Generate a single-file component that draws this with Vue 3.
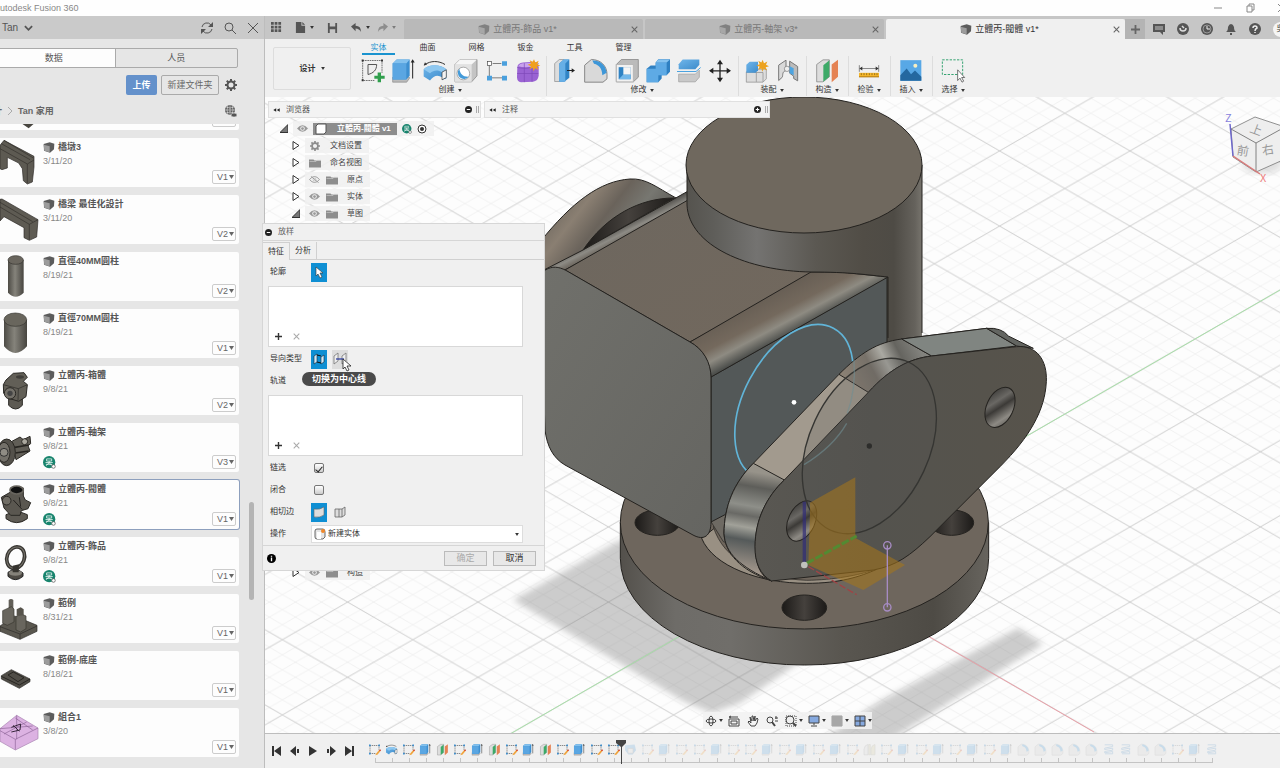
<template>
  <div class="app">
    <!-- shared icon shapes -->
    <svg class="defs" aria-hidden="true">
      <defs>
        <linearGradient id="g-blue" x1="0" y1="0" x2="1" y2="1"><stop offset="0" stop-color="#6fb5ea" /><stop offset="1" stop-color="#3d8ccb" /></linearGradient>
        <linearGradient id="g-metal" x1="0" x2="1"><stop offset="0" stop-color="#4d4b45" /><stop offset=".45" stop-color="#85837b" /><stop offset="1" stop-color="#474540" /></linearGradient>
      </defs>
      <symbol id="i-cube" viewBox="0 0 36 33"><path d="M2 6L20 1L34 5L33 22L21 32L3 26Z" fill="#5c5c5c" /><path d="M2 8L20 13V31L4 26Z" fill="#9c9c9c" /></symbol>
      <symbol id="i-sketch" viewBox="297 168 78 80">
        <path d="M305 178H363V215M305 178V238H340" fill="none" stroke="#333" stroke-width="2" stroke-dasharray="5 2" />
        <path d="M321 190H347C347 207 337 216 321 220Z" fill="#eee" stroke="#555" stroke-width="3" />
        <path d="M302 175h6v6h-6zM360 175h6v6h-6zM302 234h6v6h-6z" fill="#333" />
        <path d="M350 214h10v10h11v9h-11v10h-10v-10h-10v-9h10z" fill="#2f9e4c" />
      </symbol>
      <symbol id="i-extrude" viewBox="391 168 78 80">
        <path d="M396 228L403 221L446 228V232L438 243H396Z" fill="#bbb" stroke="#888" stroke-width="2" />
        <path d="M396 187L408 175H447V224L437 235H396Z" fill="#3d8fd0" /><path d="M396 187L408 175H447L437 187Z" fill="#83c1ee" /><path d="M396 187H437V235H396Z" fill="#5aa6e2" />
        <path d="M456 232V182" stroke="#222" stroke-width="3" /><path d="M450 184L456 174L462 184Z" fill="#222" />
      </symbol>
      <symbol id="i-revolve" viewBox="480 168 78 80">
        <path d="M488 191C505 178 530 178 549 190" fill="none" stroke="#333" stroke-width="3" /><path d="M485 193l4-10 6 8z" fill="#333" />
        <path d="M485 204C500 188 535 188 553 204L553 232L540 236V228C528 220 515 222 504 238L485 226Z" fill="url(#g-blue)" />
        <path d="M485 204C500 188 535 188 553 204L540 213C528 205 515 206 504 216Z" fill="#8fc8f0" /><path d="M540 213L553 206V229L540 236Z" fill="#f3f3f3" stroke="#333" stroke-width="2" />
      </symbol>
      <symbol id="i-hole" viewBox="572 168 78 80">
        <path d="M578 190L593 175H644V224L628 242H578Z" fill="#c4c4c4" stroke="#777" stroke-width="2" /><path d="M578 190H628V242H578Z" fill="#e2e2e2" /><path d="M578 190L593 175H644L628 190Z" fill="#f6f6f6" />
        <circle cx="603" cy="217" r="19" fill="#fff" stroke="#888" stroke-width="2" /><path d="M591 203A18 18 0 1 0 619 227C602 228 593 218 591 203Z" fill="#459bd9" />
      </symbol>
      <symbol id="i-rect" viewBox="660 168 78 80">
        <path d="M676 188V230H720M686 187H712" fill="none" stroke="#444" stroke-width="2" /><rect x="670" y="181" width="12" height="12" fill="#fff" stroke="#444" stroke-width="2" />
        <path d="M714 180h15v14h-15zM669 224h15v14h-15zM714 224h15v14h-15z" fill="#4ba0dd" />
      </symbol>
      <symbol id="i-form" viewBox="754 168 78 80">
        <path d="M761 198Q762 186 778 184L812 182Q824 186 825 198V224Q823 240 808 242L772 243Q760 241 760 228Z" fill="#9a63d3" /><path d="M763 195Q770 185 780 186L810 185Q815 190 806 197Q780 200 763 195Z" fill="#c9a2ee" />
        <path d="M760 217H824M782 186V243M805 197V242M761 199Q790 205 806 197L825 187" stroke="#7d49b8" stroke-width="2" fill="none" />
        <path d="M811 174l4 10 10-5-4 10 9 4-10 3 4 10-10-5-4 9-3-10-10 4 5-9-10-4 10-4-4-10 9 5z" fill="#f0a01e" />
      </symbol>
      <symbol id="i-press" viewBox="871 168 78 80">
        <path d="M879 187L893 175H906V232L893 241H879Z" fill="#ddd" stroke="#888" stroke-width="2" /><path d="M893 187L906 175H923V230L908 242H893Z" fill="#3184c5" /><path d="M893 187L906 175H923L911 187V242H893Z" fill="#66afe6" />
        <path d="M916 208H934" stroke="#222" stroke-width="3" /><path d="M930 201L940 208L930 215Z" fill="#222" />
      </symbol>
      <symbol id="i-fillet" viewBox="962 168 78 80">
        <path d="M967 192L987 175C1015 175 1034 194 1034 220V233L1022 243H967Z" fill="#d9d9d9" stroke="#888" stroke-width="3" /><path d="M990 178C1013 176 1030 191 1033 215L1020 222C1019 203 1011 192 995 188Z" fill="#3e97d8" />
      </symbol>
      <symbol id="i-shell" viewBox="1054 168 78 80">
        <path d="M1061 190L1076 175H1127V228L1112 242H1061Z" fill="#bbb" stroke="#777" stroke-width="2" /><path d="M1061 190H1112V242H1061Z" fill="#f1f1f1" stroke="#aaa" stroke-width="2" /><path d="M1068 198H1104V234H1068Z" fill="#2f82c3" /><path d="M1068 234L1082 220H1104V234Z" fill="#73b8ea" /><path d="M1082 198H1104V220H1082Z" fill="#f5f5f5" />
      </symbol>
      <symbol id="i-combine" viewBox="12 168 78 80">
        <path d="M17 203L29 193H44V184L52 174H87V212L77 222H62V232L52 243H17Z" fill="#2f80c2" /><path d="M17 203H44V184H77V222H52V243H17Z" fill="#5eaae5" /><path d="M44 184L52 175H87L77 184Z" fill="#85c2ef" />
      </symbol>
      <symbol id="i-split" viewBox="104 168 78 80">
        <path d="M112 189L124 175H174V191L162 204H112Z" fill="url(#g-blue)" /><path d="M107 211H164L178 199" fill="none" stroke="#4ba3e0" stroke-width="3" /><path d="M112 219H162L174 207V228L162 242H112Z" fill="#c9c9c9" stroke="#999" stroke-width="2" />
      </symbol>
      <symbol id="i-move" viewBox="196 168 78 80">
        <path d="M207 209H263M235 181V237" stroke="#222" stroke-width="4" /><path d="M202 209l13-9v18zM268 209l-13-9v18zM235 176l-9 13h18zM235 243l-9-13h18z" fill="#222" />
      </symbol>
      <symbol id="i-newcomp" viewBox="309 168 78 80">
        <path d="M316 212L325 204H376V233L366 243H316Z" fill="#ddd" stroke="#888" stroke-width="2" /><path d="M316 214H366M346 214V242M366 214V242" fill="none" stroke="#888" stroke-width="2" /><path d="M316 191L326 182H351V207L344 215H316Z" fill="url(#g-blue)" />
        <path d="M365 176l4 10 10-5-4 10 9 4-10 3 4 10-10-5-4 9-3-10-10 4 5-9-10-4 10-4-4-10 9 5z" fill="#eca21f" />
      </symbol>
      <symbol id="i-joint" viewBox="402 168 78 80">
        <path d="M413 192L435 177V208C423 211 426 222 424 228L413 238Z" fill="#d9d9d9" stroke="#777" stroke-width="3" /><path d="M446 180L470 196V239L458 232V225L446 216Z" fill="#bbb" stroke="#777" stroke-width="3" /><circle cx="438" cy="203" r="8" fill="#eee" stroke="#777" stroke-width="2" /><path d="M446 195L458 201V222L446 216Z" fill="#4da4e0" />
      </symbol>
      <symbol id="i-plane" viewBox="521 168 78 80">
        <path d="M529 190L548 176H567V227L548 242H529Z" fill="#ddd" stroke="#777" stroke-width="2" /><path d="M549 192L567 177V227L549 242Z" fill="#3daa68" /><path d="M574 190L593 176V227L574 243Z" fill="#e58354" />
      </symbol>
      <symbol id="i-measure" viewBox="648 168 78 80">
        <path d="M658 192V212M716 192V212M664 202H710" stroke="#555" stroke-width="2" /><path d="M658 202l9-6v12zM716 202l-9-6v12z" fill="#333" /><rect x="657" y="215" width="60" height="12" fill="#f7b82c" /><path d="M657 227H717" stroke="#b07400" stroke-width="3" /><path d="M664 216v6M672 216v6M680 216v6M688 216v6M696 216v6M704 216v6M711 216v6" stroke="#6b5010" stroke-width="2" />
      </symbol>
      <symbol id="i-insert" viewBox="773 168 78 80">
        <rect x="780" y="177" width="63" height="62" fill="#58a8e6" /><path d="M780 222L799 202L812 219L824 208L843 227V239H780Z" fill="#2468a0" /><circle cx="825" cy="194" r="6" fill="#f7efc2" />
      </symbol>
      <symbol id="i-select" viewBox="897 168 78 80">
        <rect x="904" y="176" width="61" height="44" fill="none" stroke="#36a372" stroke-width="3" stroke-dasharray="7 4" /><path d="M950 206V238L957 231L963 243L968 240L962 229H971Z" fill="#fff" stroke="#333" stroke-width="2" />
      </symbol>
      <symbol id="i-tsketch" viewBox="0 0 39 36">
        <path d="M6 6H33V20M6 6V30H22" fill="none" stroke="#555" stroke-width="2" stroke-dasharray="4 2" /><path d="M3 3h5v5H3zM31 3h5v5h-5zM3 28h5v5H3z" fill="#3d8fd0" /><path d="M24 31L34 19L38 22L29 33L22 35Z" fill="#f0a43d" /><path d="M33 20l4-3 2 4-3 2z" fill="#d23b2f" />
      </symbol>
      <symbol id="i-tloft" viewBox="0 0 39 36"><path d="M3 5L32 3L36 20L26 33H13L3 20Z" fill="url(#g-blue)" /><path d="M12 15H27V29H12Z" fill="#ddd" stroke="#888" stroke-width="2" /></symbol>
      <symbol id="i-thread" viewBox="0 0 39 36"><path d="M8 4H32V9L8 14V18L32 14V20L8 24V28L32 24V31H9" fill="none" stroke="#5a96c8" stroke-width="3" /></symbol>
      <symbol id="i-mirror" viewBox="0 0 39 36"><path d="M3 34V17Q5 4 15 3V34Z" fill="#ddd" stroke="#888" stroke-width="2" /><path d="M24 34V17Q26 4 36 3V34ZM17 3h5v31h-5z" fill="#d6cfa3" stroke="#998" stroke-width="2" /></symbol>
      <symbol id="i-gear" viewBox="0 0 24 24"><circle cx="12" cy="12" r="7" fill="none" stroke="currentColor" stroke-width="4" /><path d="M12 0v5M12 19v5M0 12h5M19 12h5M3.500 3.500l4 4M16.500 16.500l4 4M20.500 3.500l-4 4M7.500 16.500l-4 4" stroke="currentColor" stroke-width="4" /></symbol>
      <symbol id="i-folder" viewBox="0 0 24 18"><path d="M0 2H9L11 4H24V18H0Z" fill="currentColor" /><path d="M1 6H14L16 3H24" fill="none" stroke="#ddd" stroke-width="1" /></symbol>
      <symbol id="i-eye" viewBox="0 0 24 14"><path d="M0 7Q12 -7 24 7Q12 21 0 7Z" fill="currentColor" /><circle cx="12" cy="7" r="5" fill="#eee" /><circle cx="12" cy="7" r="3" fill="currentColor" /></symbol>
      <symbol id="i-eyeoff" viewBox="0 0 24 14"><path d="M1 7Q12 -6 23 7Q12 20 1 7ZM4 0L21 14" fill="none" stroke="currentColor" stroke-width="2" /><circle cx="12" cy="7" r="3" fill="none" stroke="currentColor" stroke-width="1" /></symbol>
      <symbol id="i-user" viewBox="0 0 36 36"><circle cx="17" cy="17" r="17" fill="#17846d" /><path d="M10 8H24V14H10ZM7 18H27M17 14V19M17 19L8 27M17 19L26 27M8 23H26" fill="none" stroke="#fff" stroke-width="2" /><circle cx="29" cy="29" r="5" fill="#fff" stroke="#555" stroke-width="2" /></symbol>
      <symbol id="i-collapse" viewBox="0 0 24 12"><path d="M11 0V12L1 6ZM23 0V12L13 6Z" fill="#222" /></symbol>
      <symbol id="i-minus" viewBox="0 0 20 20"><circle cx="10" cy="10" r="10" fill="#222" /><path d="M5 10H15" stroke="#fff" stroke-width="3" /></symbol>
      <symbol id="i-plusdot" viewBox="0 0 20 20"><circle cx="10" cy="10" r="10" fill="#222" /><path d="M5 10H15M10 5V15" stroke="#fff" stroke-width="3" /></symbol>
      <symbol id="i-x" viewBox="0 0 20 20"><path d="M2 2L18 18M18 2L2 18" stroke="currentColor" stroke-width="3" /></symbol>
      <symbol id="i-plus" viewBox="0 0 20 20"><path d="M10 0V20M0 10H20" stroke="currentColor" stroke-width="4" /></symbol>
      <symbol id="i-caret" viewBox="0 0 10 8"><path d="M0 0H10L5 8Z" fill="currentColor" /></symbol>

      <symbol id="t-partial" viewBox="0 0 120 147"><path d="M66 128L104 126L86 142Z" fill="#47453f" /></symbol>
      <symbol id="t-pier" viewBox="0 0 120 147"><path d="M0 22L12 7L102 55V87L97 132L82 138L70 128L67 92L56 75L22 58V90L6 95L0 92Z" fill="#5d5a52" stroke="#2d2b27" stroke-width="2" /><path d="M0 32L82 78L102 66M82 78V136M12 7L100 60M4 17L90 65" fill="none" stroke="#33312c" stroke-width="2" /></symbol>
      <symbol id="t-beam" viewBox="0 0 120 147"><path d="M0 13L6 12L114 74L110 126L88 136L72 128V98L12 65L0 78Z" fill="#5e5b53" stroke="#2d2b27" stroke-width="2" /><path d="M0 36L88 88L114 74M88 88V134M0 22L98 80" fill="none" stroke="#33312c" stroke-width="2" /></symbol>
      <symbol id="t-rod" viewBox="0 0 120 147"><path d="M24 24V122Q47 146 71 122V24Z" fill="url(#g-metal)" /><ellipse cx="47" cy="24" rx="23" ry="13" fill="#6a665e" stroke="#35332f" stroke-width="2" /></symbol>
      <symbol id="t-can" viewBox="0 0 120 147"><path d="M12 32V112Q46 152 81 112V32Z" fill="url(#g-metal)" /><ellipse cx="46" cy="32" rx="34" ry="20" fill="#69665d" stroke="#35332f" stroke-width="2" /></symbol>
      <symbol id="t-box" viewBox="0 0 120 147"><path d="M26 98V118Q47 140 67 118V98Z" fill="#5d5a53" stroke="#2b2925" stroke-width="3" /><path d="M10 56L18 42L40 22L72 20L82 34L70 46L82 56L78 92L56 106L30 98L11 82Z" fill="#625f57" stroke="#2b2925" stroke-width="3" /><path d="M10 56L55 68L82 56M55 68L54 104" stroke="#2b2925" stroke-width="2" fill="none" /><circle cx="30" cy="82" r="17" fill="#74716a" stroke="#2b2925" stroke-width="3" /><circle cx="30" cy="82" r="8" fill="#444" /><ellipse cx="60" cy="33" rx="12" ry="5" fill="#3f3d39" /></symbol>
      <symbol id="t-fork" viewBox="0 0 120 147"><path d="M34 56L60 42L70 50L90 40L92 62L84 68L90 84L48 110Z" fill="#615e57" stroke="#2b2925" stroke-width="3" /><path d="M40 74L86 66M46 90L86 84" stroke="#272521" stroke-width="5" /><ellipse cx="20" cy="88" rx="26" ry="40" fill="#54514b" stroke="#2b2925" stroke-width="3" /><ellipse cx="12" cy="88" rx="18" ry="30" fill="#737069" stroke="#2b2925" stroke-width="3" /><circle cx="12" cy="88" r="12" fill="#8f8c84" stroke="#333" stroke-width="3" /><circle cx="74" cy="56" r="9" fill="#aaa79e" stroke="#2b2925" stroke-width="3" /></symbol>
      <symbol id="t-valve" viewBox="0 0 120 147"><path d="M18 104Q50 88 82 104V116Q50 140 18 116Z" fill="#5e5b54" stroke="#2b2925" stroke-width="3" /><path d="M4 52L32 36V24H70V48L76 60L92 68L84 86L64 92L60 106H32L12 84Z" fill="#5a5750" stroke="#2b2925" stroke-width="3" /><ellipse cx="50" cy="30" rx="20" ry="12" fill="#111" stroke="#68655e" stroke-width="5" /><circle cx="20" cy="62" r="13" fill="#706d65" stroke="#2b2925" stroke-width="3" /><path d="M40 60L66 88M58 52L62 80" stroke="#24221f" stroke-width="3" /></symbol>
      <symbol id="t-ring" viewBox="0 0 120 147"><ellipse cx="47" cy="62" rx="26" ry="33" fill="none" stroke="#383632" stroke-width="11" transform="rotate(20 47 62)" /><ellipse cx="47" cy="62" rx="26" ry="33" fill="none" stroke="#7a776f" stroke-width="3" transform="rotate(20 47 62)" /><path d="M24 106Q46 88 69 108V118Q46 138 24 118Z" fill="#4d4a44" stroke="#222" stroke-width="3" /><ellipse cx="46" cy="108" rx="20" ry="8" fill="#85827a" /><path d="M38 86L57 82L56 106H38Z" fill="#36342f" /></symbol>
      <symbol id="t-blocks" viewBox="0 0 120 147"><path d="M0 96L44 66L111 94V112L60 136L0 112Z" fill="#5a574f" stroke="#2e2c28" stroke-width="2" /><path d="M0 98L60 120L111 96M60 120V136" fill="none" stroke="#2e2c28" stroke-width="2" /><path d="M26 18Q33 12 40 18V50H26Z" fill="#625f58" /><path d="M8 50L34 38L42 45V84L22 94L8 88ZM48 68L64 60L78 66V104L62 114L48 108Z" fill="#69665e" stroke="#38362f" stroke-width="2" /><path d="M50 46L62 40L71 46V64L50 66Z" fill="#56534b" /></symbol>
      <symbol id="t-plate" viewBox="0 0 120 147"><path d="M4 74L34 56L90 84V92L58 112L4 84Z" fill="#504d47" stroke="#2e2c28" stroke-width="2" /><path d="M4 76L58 102L90 84M24 72L40 63L72 80L54 92Z" fill="none" stroke="#282622" stroke-width="3" /></symbol>
      <symbol id="t-assy" viewBox="0 0 120 147"><path d="M0 62L50 22L114 60V92L46 126L0 100Z" fill="#dcb2e2" stroke="#a883b0" stroke-width="2" /><path d="M0 68L46 94L114 60M46 94V125M0 62L98 54M12 78L80 42M46 30L98 66M50 22V94" fill="none" stroke="#8c6497" stroke-width="2" /><path d="M34 58L62 48L60 66L34 72M40 52L58 70" fill="none" stroke="#38273d" stroke-width="3" /></symbol>
    </svg>

    <header class="window-bar">
      <span class="window-title">Autodesk Fusion 360</span>
      <div class="window-controls">
        <button aria-label="Minimize"><svg viewBox="0 0 10 10"><path d="M1 5H9" /></svg></button>
        <button aria-label="Restore"><svg viewBox="0 0 10 10"><path d="M2 3H7V9H2ZM4 3V1H9V7H7" /></svg></button>
        <button aria-label="Close"><svg viewBox="0 0 10 10"><path d="M1 1L9 9M9 1L1 9" /></svg></button>
      </div>
    </header>

    <div class="main">
      <aside class="data-panel">
        <div class="panel-head">
          <button class="account">Tan <svg viewBox="0 0 10 8"><path d="M1 2L5 6L9 2" /></svg></button>
          <button aria-label="Refresh"><svg viewBox="0 0 14 14"><path d="M2 6A5 5 0 0 1 11 4M12 8A5 5 0 0 1 3 10" /><path d="M13 1V6H8ZM1 13V8H6Z" class="solid" /></svg></button>
          <button aria-label="Search"><svg viewBox="0 0 14 14"><circle cx="6" cy="6" r="4" /><path d="M9 9L13 13" /></svg></button>
          <button aria-label="Close panel"><svg viewBox="0 0 14 14"><path d="M2 2L12 12M12 2L2 12" /></svg></button>
        </div>
        <div class="data-tabs">
          <button class="on">数据</button>
          <button>人员</button>
        </div>
        <div class="actions">
          <button class="upload">上传</button>
          <button class="new-folder">新建文件夹</button>
          <button class="bare" aria-label="Settings"><svg class="s12"><use href="#i-gear" /></svg></button>
        </div>
        <nav class="crumbs">
          <a href="#" class="cut">计</a>
          <svg viewBox="0 0 6 10"><path d="M1 1L5 5L1 9" /></svg>
          <a href="#">Tan 家用</a>
          <button class="bare globe" aria-label="Web view">
            <svg viewBox="0 0 12 12"><circle cx="5" cy="5" r="5" fill="#555" /><path d="M0 5H10M5 0V10M1 2Q5 4 9 2M1 8Q5 6 9 8M3 0Q1 5 3 10M7 0Q9 5 7 10" stroke="#e6e6e6" fill="none" stroke-width=".6" /><ellipse cx="9" cy="10" rx="3" ry="2" fill="#555" stroke="#e6e6e6" stroke-width=".6" /></svg>
          </button>
        </nav>
        <div class="file-area">
          <ul class="files">
            <li v-for="(file, i) in files" :key="i" class="file" :class="{ current: file.current }">
              <svg class="thumb"><use :href="'#t-' + file.thumb" /></svg>
              <div class="file-info">
                <div class="file-name"><svg><use href="#i-cube" /></svg>{{ file.name }}</div>
                <div class="file-date">{{ file.date }}</div>
                <svg v-if="file.user" class="file-user"><use href="#i-user" /></svg>
              </div>
              <button class="version">{{ file.version }}<svg v-if="file.version"><use href="#i-caret" /></svg></button>
            </li>
          </ul>
          <div class="scroll-track"><div class="scroll-thumb"></div></div>
        </div>
      </aside>

      <section class="workspace">
        <div class="doc-bar">
          <div class="quick">
            <button aria-label="Data panel"><svg viewBox="0 0 12 12"><path d="M0 0h3v3H0zM4 0h3v3H4zM8 0h3v3H8zM0 4h3v3H0zM4 4h3v3H4zM8 4h3v3H8zM0 8h3v3H0zM4 8h3v3H4zM8 8h3v3H8z" /></svg></button>
            <button class="drop" aria-label="File"><svg viewBox="0 0 12 12"><path d="M1 0H7V4H11V12H1ZM8 0L11 3H8Z" /></svg><svg class="caret"><use href="#i-caret" /></svg></button>
            <button aria-label="Save"><svg viewBox="0 0 12 12"><path d="M1 1H11V12H1ZM3 1V5H9V1M3 12V8H9V12" fill-rule="evenodd" /><path d="M4 1H6V4H4ZM4 9H8V11H4Z" fill="#c6c6c6" /></svg></button>
            <button class="drop" aria-label="Undo"><svg viewBox="0 0 12 12"><path d="M5 1V4Q11 4 11 11Q9 7 5 7V10L0 5Z" /></svg><svg class="caret"><use href="#i-caret" /></svg></button>
            <button class="drop dim" aria-label="Redo"><svg viewBox="0 0 12 12"><path d="M7 1V4Q1 4 1 11Q3 7 7 7V10L12 5Z" /></svg><svg class="caret"><use href="#i-caret" /></svg></button>
          </div>
          <div v-for="doc in docs" :key="doc.name" class="doc" :class="{ active: doc.active }">
            <button class="doc-name"><svg><use href="#i-cube" /></svg>{{ doc.name }}</button>
            <button class="doc-close" aria-label="Close tab"><svg><use href="#i-x" /></svg></button>
          </div>
          <div class="status">
            <button class="add" aria-label="New tab"><svg><use href="#i-plus" /></svg></button>
            <button aria-label="Comments"><svg viewBox="0 0 12 12"><path d="M0 1H12V9H10V12L7 9H0Z" /><path d="M2 4H10M2 6H10" stroke="#c6c6c6" /></svg></button>
            <button aria-label="Extensions"><svg viewBox="0 0 12 12"><circle cx="6" cy="6" r="6" /><path d="M3 5A3 3 0 1 0 9 5M5 3L7 5" stroke="#ddd" stroke-width="1.500" fill="none" /></svg></button>
            <button aria-label="Job status"><svg viewBox="0 0 12 12"><circle cx="6" cy="6" r="6" /><circle cx="6" cy="6" r="4" fill="none" stroke="#999" /><path d="M6 3V6H9" stroke="#eee" fill="none" /></svg></button>
            <button aria-label="Notifications"><svg viewBox="0 0 12 12"><path d="M1 9Q3 8 3 4Q4 1 6 1Q8 1 9 4Q9 8 11 9ZM5 10H7V12H5Z" /></svg></button>
            <button aria-label="Help"><svg viewBox="0 0 12 12"><circle cx="6" cy="6" r="6" /><path d="M4 5Q4 3 6 3Q8 3 8 5Q6 6 6 8M6 9V10" stroke="#eee" stroke-width="1.500" fill="none" /></svg></button>
            <button class="avatar">吳</button>
          </div>
        </div>

        <div class="ribbon">
          <button class="design">设计<svg><use href="#i-caret" /></svg></button>
          <div class="ribbon-body">
            <div class="ribbon-tabs">
              <button v-for="(t, i) in ribbonTabs" :key="t" :class="{ on: i === 0 }">{{ t }}</button>
            </div>
            <div class="groups">
              <div v-for="g in groups" :key="g.label" class="group">
                <div class="tools">
                  <button v-for="icon in g.icons" :key="icon" class="tool" :aria-label="icon"><svg><use :href="'#i-' + icon" /></svg></button>
                </div>
                <button class="group-label">{{ g.label }}<svg><use href="#i-caret" /></svg></button>
              </div>
            </div>
          </div>
        </div>

        <div class="canvas">
          <svg class="scene" viewBox="265 97 1015 636" preserveAspectRatio="xMinYMin slice" aria-hidden="true">
            <defs>
              <pattern id="minor" x="804" y="564.500" width="26.080" height="15.040" patternUnits="userSpaceOnUse"><path d="M0 0L26.080 15.040M0 15.040L26.080 0" stroke="#eeeeee" stroke-width=".8" fill="none" /></pattern>
              <pattern id="major" x="804" y="564.500" width="130.400" height="75.200" patternUnits="userSpaceOnUse"><path d="M0 0L130.400 75.200M0 75.200L130.400 0" stroke="#d0d0d0" stroke-width=".9" fill="none" /></pattern>
              <filter id="soft"><feGaussianBlur stdDeviation="3" /></filter>
              <linearGradient id="m-cyl" x1="686" x2="922" y1="0" y2="0" gradientUnits="userSpaceOnUse"><stop offset="0" stop-color="#55534e" /><stop offset=".12" stop-color="#5f5e5a" /><stop offset=".3" stop-color="#747371" /><stop offset=".55" stop-color="#5b5852" /><stop offset=".75" stop-color="#514d46" /><stop offset=".88" stop-color="#4e4b45" /><stop offset=".97" stop-color="#65625c" /><stop offset="1" stop-color="#77746d" /></linearGradient>
              <linearGradient id="m-lobe" x1="560" y1="190" x2="650" y2="260" gradientUnits="userSpaceOnUse"><stop offset="0" stop-color="#6b655d" /><stop offset=".25" stop-color="#8a7f72" /><stop offset=".45" stop-color="#6a635b" /><stop offset=".65" stop-color="#777771" /><stop offset="1" stop-color="#4d4b47" /></linearGradient>
              <linearGradient id="m-dark" x1="0" y1="0" x2="1" y2="0"><stop offset="0" stop-color="#1c1a18" /><stop offset=".5" stop-color="#45413d" /><stop offset="1" stop-color="#1c1a18" /></linearGradient>
              <linearGradient id="m-hole" x1="0" y1="0" x2="1" y2="1"><stop offset="0" stop-color="#2b2a28" /><stop offset=".35" stop-color="#6a6864" /><stop offset=".5" stop-color="#3c3a37" /><stop offset=".75" stop-color="#8d8a84" /><stop offset="1" stop-color="#4b4945" /></linearGradient>
              <linearGradient id="m-band" x1="750" y1="306" x2="770" y2="344" gradientUnits="userSpaceOnUse"><stop offset="0" stop-color="#685f55" /><stop offset=".45" stop-color="#74695d" /><stop offset=".72" stop-color="#8e8b82" /><stop offset="1" stop-color="#4e504d" /></linearGradient>
              <linearGradient id="m-band2" x1="620" y1="226" x2="627" y2="240" gradientUnits="userSpaceOnUse"><stop offset="0" stop-color="#54524e" /><stop offset=".5" stop-color="#8d8b85" /><stop offset="1" stop-color="#645d54" /></linearGradient>
              <linearGradient id="m-front" x1="0" y1="0" x2="1" y2="1"><stop offset="0" stop-color="#70706b" /><stop offset="1" stop-color="#656561" /></linearGradient>
              <linearGradient id="m-top" x1="0" y1="0" x2="1" y2="1"><stop offset="0" stop-color="#6d675f" /><stop offset="1" stop-color="#72685d" /></linearGradient>
              <linearGradient id="m-base" x1="60" x2="1166" y1="0" y2="0" gradientUnits="userSpaceOnUse"><stop offset="0" stop-color="#53504b" /><stop offset=".15" stop-color="#6e6c68" /><stop offset=".3" stop-color="#706e6a" /><stop offset=".6" stop-color="#595650" /><stop offset=".85" stop-color="#4e4b45" /><stop offset="1" stop-color="#67645e" /></linearGradient>
              <linearGradient id="m-flange" x1="470" y1="500" x2="1330" y2="500" gradientUnits="userSpaceOnUse"><stop offset="0" stop-color="#595752" /><stop offset=".4" stop-color="#54534e" /><stop offset="1" stop-color="#57534b" /></linearGradient>
              <linearGradient id="m-rim" x1="430" y1="450" x2="380" y2="740" gradientUnits="userSpaceOnUse"><stop offset="0" stop-color="#97938a" /><stop offset=".15" stop-color="#5e5e5a" /><stop offset=".35" stop-color="#8e8f89" /><stop offset=".45" stop-color="#696965" /><stop offset=".57" stop-color="#a1a199" /><stop offset=".7" stop-color="#555a5a" /><stop offset="1" stop-color="#a0958a" /></linearGradient>
              <linearGradient id="m-rim2" x1="740" y1="180" x2="950" y2="70" gradientUnits="userSpaceOnUse"><stop offset="0" stop-color="#8a8074" /><stop offset=".35" stop-color="#777169" /><stop offset=".55" stop-color="#aaa9a2" /><stop offset=".75" stop-color="#65645f" /><stop offset="1" stop-color="#83837e" /></linearGradient>
            </defs>
            <rect x="265" y="97" width="1015" height="636" fill="#fdfdfd" />
            <rect x="265" y="97" width="1015" height="636" fill="url(#minor)" />
            <rect x="265" y="97" width="1015" height="636" fill="url(#major)" />
            <g fill="#777" opacity=".36" filter="url(#soft)">
              <path d="M513 600L620 540L720 560L810 655L740 703L712 713L685 702Z" />
              <path d="M1018 628L1043 644L953 700L890 740H822L882 700Z" />
            </g>
            <path d="M804 564.500L510 734M804 564.500L1280 290" stroke="#a9dfa9" fill="none" />
            <path d="M804 564.500L1094 732" stroke="#e9a0a8" fill="none" />

            <!-- base disc -->
            <g transform="translate(600 320) scale(.33333)" stroke="#24221f" stroke-width="3">
              <path d="M61 607V715A552 320 0 0 0 1166 715V607Z" fill="url(#m-base)" />
              <ellipse cx="613" cy="607" rx="552" ry="320" fill="#6e665d" />
              <ellipse cx="172" cy="608" rx="67" ry="38" fill="url(#m-dark)" />
              <ellipse cx="1055" cy="608" rx="66" ry="38" fill="url(#m-dark)" />
              <ellipse cx="613" cy="863" rx="67" ry="38" fill="url(#m-dark)" />
              <path d="M305 655C340 740 480 790 620 790C720 790 780 770 830 748L500 500Z" fill="#999083" />
              <path d="M340 620C370 720 480 775 620 781C700 780 780 765 820 750L520 500Z" fill="#6f665c" stroke-width="2" />
              <path d="M330 600L390 568L430 690L370 665Z" fill="#6e6a63" stroke-width="2" />
            </g>

            <!-- housing -->
            <g stroke="#24221f">
              <path d="M887 250H922V345L887 350Z" fill="url(#m-cyl)" stroke="none" />
              <path d="M540 242C572 202 600 181 630 179C646 178 656 187 676 198L545 276Z" fill="url(#m-lobe)" />
              <path d="M583 250C606 216 640 198 674 198Z" fill="url(#m-dark)" />
              <path d="M540 272L583 250L690 190V202L565 270Z" fill="url(#m-band2)" />
              <path d="M565 270L688 200L820 272L690 342Z" fill="url(#m-top)" />
              <path d="M711 377L887 277V400L730 512L711 522Z" fill="#535858" />
              <path d="M690 342L811 272H840L888 277L711 377C710 362 702 348 690 342Z" fill="url(#m-band)" />
              <path d="M687 165V205C689 246 748 271 811 272C850 272 868 275 888 277V338L922 333V165Z" fill="url(#m-cyl)" stroke="none" />
              <path d="M687 165V205C689 246 748 271 811 272C850 272 868 275 888 277V338M922 165V333" fill="none" />
              <ellipse cx="804" cy="165" rx="118" ry="68" fill="#6f685e" />
              <path d="M540 274C550 265 558 266 567 271L690 342C703 349 711 362 711 378V522C711 536 704 541 693 535L565 465C553 458 547 446 545 430Z" fill="url(#m-front)" />
            </g>

            <!-- flange -->
            <g transform="translate(600 320) scale(.33333)" stroke="#24221f" stroke-width="3">
              <ellipse cx="582" cy="247" rx="150" ry="252" transform="rotate(28 582 247)" fill="none" stroke="#61b4d8" stroke-width="5" />
              <circle cx="582" cy="247" r="7" fill="#fff" stroke="none" />
              <path d="M460 430L717 163L905 57L1160 25Q1200 22 1250 75L1000 300L515 783C420 750 375 700 372 640C373 560 400 490 460 430Z" fill="#a29a8e" />
              <path d="M460 430L553 480C500 530 465 600 466 680C466 730 480 770 515 783C420 740 375 700 372 640C373 560 400 490 460 430Z" fill="url(#m-rim)" />
              <path d="M717 163C780 100 830 67 905 57L995 108C930 116 870 145 805 217Z" fill="url(#m-rim2)" />
              <path d="M905 57L1160 25L1250 78L995 108Z" fill="#808581" />
              <path d="M1160 25Q1205 22 1225 48L1300 85L1250 78Z" fill="#636561" />
              <path d="M553 480L805 217C870 145 930 116 995 108L1250 80C1310 75 1342 120 1339 185C1335 270 1290 350 1200 440L990 650C930 707 890 737 820 750L515 783C480 765 464 725 465 680C465 600 500 530 553 480Z" fill="url(#m-flange)" />
              <ellipse cx="605" cy="603" rx="40" ry="64" transform="rotate(25 605 603)" fill="url(#m-hole)" />
              <ellipse cx="1200" cy="262" rx="40" ry="64" transform="rotate(25 1200 262)" fill="url(#m-hole)" />
              <ellipse cx="808" cy="378" rx="180" ry="278" transform="rotate(25 808 378)" fill="#555" fill-opacity=".2" stroke="#353532" stroke-width="4" />
              <circle cx="808" cy="378" r="8" fill="#2d2d2b" stroke="none" />
              <path d="M740 310Q700 380 612 434M762 120Q768 210 742 280" fill="none" stroke="#6f8d92" stroke-width="4" opacity=".6" />
              <g stroke="none" fill="#a87719" opacity=".55">
                <path d="M630 548L766 472V790L630 725Z" /><path d="M630 580L915 735L790 810L625 735Z" />
              </g>
              <path d="M613 735V545" stroke="#302c78" stroke-width="10" opacity=".7" /><path d="M620 730L770 648" stroke="#538a32" stroke-width="9" stroke-dasharray="24 6" /><path d="M625 740L770 824" stroke="#a14345" stroke-width="4" stroke-dasharray="20 7" />
              <circle cx="613" cy="735" r="10" fill="#bfc1bd" stroke="none" />
              <g fill="none" stroke="#a78cc4" stroke-width="4"><path d="M862 676V862" /><circle cx="862" cy="676" r="11" /><circle cx="862" cy="862" r="11" /></g>
            </g>

            <!-- view cube -->
            <g>
              <ellipse cx="1262" cy="164" rx="20" ry="10" fill="#999" opacity=".3" filter="url(#soft)" />
              <path d="M1231 129L1255 117L1285 127L1283 160L1256 172L1233 157Z" fill="#eeeeee" stroke="#777" stroke-width=".8" />
              <path d="M1231 129L1256 143L1285 127M1256 143V172" fill="none" stroke="#666" stroke-width=".8" />
              <path d="M1230 124L1233 156" stroke="#6e68cc" stroke-width="1.500" /><path d="M1233 156L1260 174" stroke="#d97979" stroke-width="1.500" />
              <g class="cube-text" font-size="12" fill="#999">
                <text x="1250" y="134" transform="rotate(20 1256 130)">上</text>
                <text x="1237" y="155" transform="rotate(10 1243 150)">前</text>
                <text x="1262" y="154" transform="rotate(-10 1268 150)">右</text>
              </g>
              <text class="axis" x="1225" y="122" fill="#8782dc" font-size="11">Z</text>
              <text class="axis" x="1260" y="182" fill="#ee8181" font-size="11">X</text>
            </g>
          </svg>

          <div class="palettes">
            <div class="palette">
              <svg class="fold"><use href="#i-collapse" /></svg><span>浏览器</span>
              <button class="bare" aria-label="Hide browser"><svg class="dot"><use href="#i-minus" /></svg></button><i></i>
            </div>
            <div class="palette comments">
              <svg class="fold"><use href="#i-collapse" /></svg><span>注释</span>
              <button class="bare" aria-label="Show comments"><svg class="dot"><use href="#i-plusdot" /></svg></button><i></i>
            </div>
          </div>

          <ul class="tree">
            <li class="root">
              <svg class="twist" viewBox="0 0 8 8"><path d="M0 8L8 0V8Z" fill="#777" stroke="#333" /></svg>
              <div class="node">
                <svg class="eye"><use href="#i-eye" /></svg>
                <span class="root-name"><svg viewBox="0 0 12 12"><path d="M1 3L3 1H11V9L9 11H1Z" fill="#fff" stroke="#555" /></svg>立體丙-閥體 v1</span>
                <svg class="s10"><use href="#i-user" /></svg>
                <svg class="s10" viewBox="0 0 10 10"><circle cx="5" cy="5" r="4" fill="#fff" stroke="#333" /><circle cx="5" cy="5" r="2" fill="#333" /></svg>
              </div>
            </li>
            <li v-for="node in nodes" :key="node.name" :class="{ last: node.last }">
              <svg v-if="node.open" class="twist" viewBox="0 0 8 8"><path d="M0 8L8 0V8Z" fill="#777" stroke="#333" /></svg>
              <svg v-else class="twist" viewBox="0 0 8 8"><path d="M1 0L7 4L1 8Z" fill="#fff" stroke="#333" /></svg>
              <div class="node">
                <svg v-if="node.eye" class="eye"><use :href="'#i-' + node.eye" /></svg>
                <svg class="kind"><use :href="'#i-' + node.icon" /></svg>
                <span>{{ node.name }}</span>
              </div>
            </li>
          </ul>

          <div class="nav-bar">
            <button class="drop" aria-label="Orbit"><svg viewBox="0 0 12 12"><ellipse cx="6" cy="6" rx="5" ry="2" /><ellipse cx="6" cy="6" rx="2" ry="5" /></svg><svg class="caret"><use href="#i-caret" /></svg></button>
            <button aria-label="Look at"><svg viewBox="0 0 12 12"><path d="M1 4H11V11H1ZM3 6H9V9H3ZM2 2H10M3 1L1 2L3 3" /></svg></button>
            <button aria-label="Pan"><svg viewBox="0 0 12 12"><path d="M4 11L1 7L2 6L4 8L3 2L5 6L5 1L6 1L7 6L8 1L8 6L10 3L11 4L10 8L8 11Z" /></svg></button>
            <button aria-label="Zoom"><svg viewBox="0 0 12 12"><circle cx="4" cy="5" r="3" /><path d="M6 7L9 11" stroke-width="2" /><path d="M9 3H12M10 1V4M9 6H12" /></svg></button>
            <button class="drop" aria-label="Fit"><svg viewBox="0 0 12 12"><path d="M1 1H11V11H1Z" stroke-dasharray="1 1" /><circle cx="5" cy="5" r="4" fill="#eee" /><path d="M8 8L11 11" stroke-width="2" /></svg><svg class="caret"><use href="#i-caret" /></svg></button>
            <button class="drop" aria-label="Display"><svg viewBox="0 0 12 12"><path d="M1 1H11V8H1Z" fill="#86a9df" /><path d="M6 8V10M3 11H9" /></svg><svg class="caret"><use href="#i-caret" /></svg></button>
            <button class="drop" aria-label="Grid"><svg viewBox="0 0 12 12"><path d="M1 1H11V11H1ZM3 1V11M5 1V11M7 1V11M9 1V11M1 3H11M1 5H11M1 7H11M1 9H11" stroke-width=".5" /></svg><svg class="caret"><use href="#i-caret" /></svg></button>
            <button class="drop" aria-label="Viewports"><svg viewBox="0 0 12 12"><path d="M1 1H11V11H1Z" fill="#86a9df" /><path d="M6 1V11M1 6H11" /></svg><svg class="caret"><use href="#i-caret" /></svg></button>
          </div>

          <form class="dialog" @submit.prevent>
            <div class="dialog-title"><svg class="dot"><use href="#i-minus" /></svg>放样</div>
            <div class="dialog-tabs">
              <button type="button" class="on">特征</button>
              <button type="button">分析</button>
            </div>
            <div class="dialog-body">
              <div class="row">
                <span class="label">轮廓</span>
                <button type="button" class="pick on" aria-label="选择轮廓"><svg viewBox="0 0 16 18"><path d="M5 4V13L7 11L9 15L11 14L9 10H12Z" fill="#fff" stroke="#333" stroke-width=".6" /></svg></button>
              </div>
              <div class="list">
                <button type="button" aria-label="添加轮廓"><svg><use href="#i-plus" /></svg></button>
                <button type="button" class="off" aria-label="删除轮廓"><svg><use href="#i-x" /></svg></button>
              </div>
              <div class="row">
                <span class="label">导向类型</span>
                <button type="button" class="pick on" aria-label="轨道类型"><svg viewBox="0 0 16 18"><path d="M3 6L6 4V12L3 14ZM10 7L13 5V12L10 14Z" fill="#cfe9f8" stroke="#123" stroke-width=".6" /><path d="M6 5L10 6M6 12L10 13" stroke="#111" stroke-width="1" /></svg></button>
                <button type="button" class="pick hover" aria-label="中心线类型"><svg viewBox="0 0 16 18"><path d="M2 6L6 3V11L2 14ZM10 6L14 3V11L10 14Z" fill="#eee" stroke="#777" stroke-width=".8" /><path d="M4 9H12" stroke="#24349a" stroke-width="1.200" /></svg></button>
                <div class="tip-anchor">
                  <svg class="pointer" viewBox="0 0 10 14"><path d="M1 1V11L3 9L5 13L7 12L5 8H9Z" fill="#fff" stroke="#222" stroke-width=".8" /></svg>
                  <div class="tip">切换为中心线</div>
                </div>
              </div>
              <div class="row"><span class="label">轨道</span></div>
              <div class="list">
                <button type="button" aria-label="添加轨道"><svg><use href="#i-plus" /></svg></button>
                <button type="button" class="off" aria-label="删除轨道"><svg><use href="#i-x" /></svg></button>
              </div>
              <div class="row"><label class="label" for="chain">链选</label><input id="chain" v-model="chain" type="checkbox"></div>
              <div class="row"><label class="label" for="closed">闭合</label><input id="closed" v-model="closed" type="checkbox"></div>
              <div class="row">
                <span class="label">相切边</span>
                <button type="button" class="pick on" aria-label="合并相切边"><svg viewBox="0 0 16 18"><path d="M3 6Q9 7 13 4V12Q9 15 3 14Z" fill="#ddd" stroke="#666" stroke-width=".6" /></svg></button>
                <button type="button" class="pick" aria-label="保留相切边"><svg viewBox="0 0 16 18"><path d="M3 6H10L13 4V12L10 14H3ZM10 6V14M7 6V14" fill="#ddd" stroke="#666" stroke-width=".8" /></svg></button>
              </div>
              <div class="row">
                <label class="label" for="operation">操作</label>
                <div class="select">
                  <svg class="s12" viewBox="0 0 12 12"><path d="M1 3Q1 1 3 1H9Q11 1 11 4V9L9 11H3Q1 11 1 9Z" fill="#e6e6e6" stroke="#444" stroke-width=".8" /><path d="M3 4H7V11H3Z" fill="#fff" /><circle cx="9" cy="3" r="2" fill="#f0882b" /></svg>
                  <select id="operation" v-model="operation"><option>新建实体</option></select>
                  <svg class="caret"><use href="#i-caret" /></svg>
                </div>
              </div>
            </div>
            <div class="dialog-foot">
              <svg class="info" viewBox="0 0 10 10"><circle cx="5" cy="5" r="5" /><path d="M5 2V3M5 4V8" stroke="#fff" stroke-width="1.500" /></svg>
              <button type="submit" disabled>确定</button>
              <button type="button">取消</button>
            </div>
          </form>
        </div>

        <footer class="timeline">
          <div class="playback">
            <button aria-label="To start"><svg viewBox="0 0 10 10"><path d="M0 0H2V10H0ZM9 0V10L2 5Z" /></svg></button>
            <button aria-label="Step back"><svg viewBox="0 0 10 10"><path d="M6 0V10L0 5ZM7 3H9V7H7Z" /></svg></button>
            <button aria-label="Play"><svg viewBox="0 0 10 10"><path d="M1 0L9 5L1 10Z" /></svg></button>
            <button aria-label="Step forward"><svg viewBox="0 0 10 10"><path d="M4 0V10L10 5ZM1 3H3V7H1Z" /></svg></button>
            <button aria-label="To end"><svg viewBox="0 0 10 10"><path d="M8 0H10V10H8ZM1 0V10L8 5Z" /></svg></button>
          </div>
          <div class="steps">
            <div v-for="(step, i) in steps" :key="i" class="step" :class="{ future: i > 14 }">
              <svg class="step-icon"><use :href="'#i-' + step" /></svg>
              <svg v-if="i === 14" class="marker" viewBox="0 0 10 24"><path d="M0 0H10V3L6 7V24H5V7L0 3Z" /></svg>
            </div>
          </div>
        </footer>
      </section>
    </div>
  </div>
</template>

<script setup>
import { ref } from 'vue'

const chain = ref(true)
const closed = ref(false)
const operation = ref('新建实体')

const files = [
  { thumb: 'partial' },
  { name: '橋墩3', date: '3/11/20', version: 'V1', thumb: 'pier' },
  { name: '橋梁 最佳化設計', date: '3/11/20', version: 'V2', thumb: 'beam' },
  { name: '直徑40MM圓柱', date: '8/19/21', version: 'V2', thumb: 'rod' },
  { name: '直徑70MM圓柱', date: '8/19/21', version: 'V1', thumb: 'can' },
  { name: '立體丙-箱體', date: '9/8/21', version: 'V2', thumb: 'box' },
  { name: '立體丙-軸架', date: '9/8/21', version: 'V3', thumb: 'fork', user: true },
  { name: '立體丙-閥體', date: '9/8/21', version: 'V1', thumb: 'valve', user: true, current: true },
  { name: '立體丙-飾品', date: '9/8/21', version: 'V1', thumb: 'ring', user: true },
  { name: '範例', date: '8/31/21', version: 'V1', thumb: 'blocks' },
  { name: '範例-底座', date: '8/18/21', version: 'V1', thumb: 'plate' },
  { name: '組合1', date: '3/8/20', version: 'V1', thumb: 'assy' }
]

const docs = [
  { name: '立體丙-飾品 v1*' },
  { name: '立體丙-軸架 v3*' },
  { name: '立體丙-閥體 v1*', active: true }
]

const ribbonTabs = ['实体', '曲面', '网格', '钣金', '工具', '管理']

const groups = [
  { label: '创建', icons: ['sketch', 'extrude', 'revolve', 'hole', 'rect', 'form'] },
  { label: '修改', icons: ['press', 'fillet', 'shell', 'combine', 'split', 'move'] },
  { label: '装配', icons: ['newcomp', 'joint'] },
  { label: '构造', icons: ['plane'] },
  { label: '检验', icons: ['measure'] },
  { label: '插入', icons: ['insert'] },
  { label: '选择', icons: ['select'] }
]

const nodes = [
  { name: '文档设置', icon: 'gear' },
  { name: '命名视图', icon: 'folder' },
  { name: '原点', icon: 'folder', eye: 'eyeoff' },
  { name: '实体', icon: 'folder', eye: 'eye' },
  { name: '草图', icon: 'folder', eye: 'eye', open: true },
  { name: '构造', icon: 'folder', eye: 'eye', last: true }
]

// s sketch, e extrude, r revolve, p plane, l loft, m mirror, f fillet, t thread
const kinds = { s: 'tsketch', e: 'extrude', r: 'revolve', p: 'plane', l: 'tloft', m: 'mirror', f: 'fillet', t: 'thread' }
const steps = [...'srsepsepsepsesslsessessesesesmsesesesefffffttffset'].map(k => kinds[k])
</script>

<style>
body {
  margin: 0;
  overflow: hidden;
}
</style>

<style scoped>
.app {
  height: 100vh;
  display: flex;
  flex-direction: column;
  overflow: hidden;
  background: #f0f0f0;
  color: #333;
  font-family: "Liberation Sans", "Noto Sans CJK SC", sans-serif;
  font-size: 8px;
  line-height: 12px;
}

.defs {
  position: absolute;
  width: 0;
  height: 0;
}

button, select {
  font: inherit;
  color: inherit;
  padding: 0;
  border: 0;
  background: none;
  white-space: nowrap;
}

svg {
  display: block;
  flex: none;
}

ul {
  list-style: none;
  margin: 0;
  padding: 0;
}

.s12 { width: 12px; height: 12px; }
.s10 { width: 10px; height: 10px; }
.dot { width: 7px; height: 7px; }
.caret { width: 4px; height: 3px; }

/* window bar */
.window-bar {
  height: 16px;
  flex: none;
  display: flex;
  justify-content: space-between;
  align-items: center;
  background: #fefefe;
}

.window-title {
  margin-left: -6px;
  font-size: 9px;
  color: #888;
}

.window-controls {
  display: flex;
  gap: 22px;
  margin-right: -7px;
}

.window-controls svg {
  width: 10px;
  height: 10px;
  fill: none;
  stroke: #888;
}

.main {
  flex: 1;
  min-height: 0;
  display: flex;
}

/* data panel */
.data-panel {
  width: 264px;
  flex: none;
  display: flex;
  flex-direction: column;
  background: #e6e6e6;
  border-right: 1px solid #bdbdbd;
}

.panel-head {
  height: 23px;
  flex: none;
  display: flex;
  align-items: center;
  gap: 9px;
  padding: 0 4px 0 2px;
  background: #cacaca;
}

.panel-head svg {
  width: 14px;
  height: 14px;
  fill: none;
  stroke: #555;
}

.panel-head .solid {
  fill: #555;
  stroke: none;
}

.panel-head .account {
  flex: 1;
  display: flex;
  align-items: center;
  gap: 6px;
  font-size: 10px;
  color: #555;
}

.panel-head .account svg {
  width: 9px;
  height: 8px;
  stroke-width: 2;
}

.data-tabs {
  display: flex;
  height: 20px;
  flex: none;
  margin: 9px 26px 0 -8px;
  border: 1px solid #aaa;
  border-radius: 2px;
  box-sizing: border-box;
}

.data-tabs button {
  flex: 1;
  font-size: 9px;
  color: #555;
}

.data-tabs .on {
  background: #fdfdfd;
  border-right: 1px solid #aaa;
}

.actions {
  display: flex;
  justify-content: flex-end;
  align-items: center;
  gap: 4px;
  padding: 7px 27px 0 0;
}

.upload, .new-folder {
  height: 20px;
  border-radius: 2px;
  font-size: 9px;
}

.upload {
  width: 31px;
  background: #6491cb;
  color: #fff;
  font-weight: bold;
}

.new-folder {
  width: 58px;
  border: 1px solid #aaa;
  color: #666;
}

.actions .bare {
  margin-left: 2px;
  color: #555;
}

.crumbs {
  height: 29px;
  flex: none;
  display: flex;
  align-items: center;
  gap: 5px;
  padding: 3px 27px 0 0;
  box-sizing: border-box;
  font-size: 9px;
  font-weight: bold;
}

.crumbs a {
  color: #666;
  text-decoration: none;
}

.crumbs .cut {
  margin-left: -7px;
}

.crumbs svg {
  width: 6px;
  height: 10px;
  fill: none;
  stroke: #aaa;
}

.crumbs .globe {
  margin-left: auto;
}

.crumbs .globe svg {
  width: 12px;
  height: 12px;
  stroke: none;
}

.file-area {
  flex: 1;
  min-height: 0;
  display: flex;
  overflow: hidden;
}

.files {
  flex: 1;
  display: flex;
  flex-direction: column;
  justify-content: flex-end;
  gap: 8px;
  padding-bottom: 11px;
}

.file {
  height: 49px;
  flex: none;
  display: flex;
  gap: 3px;
  padding-right: 3px;
  box-sizing: border-box;
  background: #fdfdfd;
  border-radius: 0 2px 2px 0;
}

.file.current {
  box-shadow: 0 0 0 1px #8d9fbd;
}

.thumb {
  width: 40px;
  height: 49px;
}

.file-info {
  flex: 1;
  padding-top: 3px;
}

.file-name {
  display: flex;
  align-items: center;
  gap: 3px;
  height: 12px;
  font-size: 9px;
  font-weight: bold;
  color: #555;
  white-space: nowrap;
}

.file-name svg {
  width: 12px;
  height: 11px;
}

.file-date {
  height: 12px;
  margin-top: 2px;
  font-size: 9px;
  color: #888;
}

.file-user {
  width: 13px;
  height: 13px;
  margin-top: 4px;
}

.version {
  align-self: flex-end;
  display: flex;
  align-items: center;
  justify-content: flex-end;
  gap: 1px;
  width: 24px;
  height: 14px;
  margin-bottom: 3px;
  padding-right: 1px;
  border: 1px solid #ccc;
  border-radius: 2px;
  font-size: 9px;
  color: #666;
}

.version svg {
  width: 5px;
  height: 4px;
}

.scroll-track {
  width: 25px;
  display: flex;
  justify-content: center;
}

.scroll-thumb {
  width: 5px;
  height: 98px;
  margin-top: 378px;
  border-radius: 3px;
  background: #b4b4b4;
}

/* document bar */
.workspace {
  flex: 1;
  min-width: 0;
  display: flex;
  flex-direction: column;
}

.doc-bar {
  height: 23px;
  flex: none;
  display: flex;
  align-items: flex-end;
  background: #c6c6c6;
}

.quick {
  width: 139px;
  height: 23px;
  flex: none;
  display: flex;
  align-items: center;
  gap: 13px;
  padding-left: 6px;
  box-sizing: border-box;
}

.quick svg {
  width: 11px;
  height: 11px;
  fill: #555;
}

.quick .caret, .nav-bar .caret {
  width: 4px;
  height: 3px;
}

.drop {
  display: flex;
  align-items: center;
  gap: 4px;
}

.quick .dim {
  margin-left: -6px;
  opacity: .5;
}

.doc {
  flex: 1;
  height: 20px;
  display: flex;
  align-items: center;
  margin-right: 2px;
  padding-right: 5px;
  background: #b9b9b9;
  border-radius: 2px 2px 0 0;
  font-size: 9px;
  color: #777;
}

.doc.active {
  margin-right: 0;
  background: #f0f0f0;
  color: #333;
}

.doc-name {
  flex: 1;
  display: flex;
  align-items: center;
  justify-content: center;
  gap: 3px;
}

.doc-name svg {
  width: 12px;
  height: 11px;
  opacity: .6;
}

.active .doc-name svg {
  opacity: 1;
}

.doc-close {
  color: #666;
}

.doc-close svg {
  width: 7px;
  height: 7px;
}

.status {
  height: 20px;
  flex: none;
  display: flex;
  align-items: center;
  gap: 12px;
  margin-right: -8px;
}

.status svg {
  width: 12px;
  height: 12px;
  fill: #555;
}

.status .add {
  display: flex;
  align-items: center;
  justify-content: center;
  width: 20px;
  height: 20px;
  margin-right: -4px;
  background: #b4b4b4;
  color: #666;
}

.status .add svg {
  width: 9px;
  height: 9px;
}

.avatar {
  width: 15px;
  height: 15px;
  border-radius: 50%;
  background: #f5f5f5;
}

/* ribbon */
.ribbon {
  height: 58px;
  flex: none;
  display: flex;
  background: #f0f0f0;
}

.design {
  width: 78px;
  height: 43px;
  margin: 8px 3px 0 8px;
  border: 1px solid #ddd;
  border-radius: 2px;
  display: flex;
  align-items: center;
  justify-content: center;
  gap: 5px;
  font-weight: bold;
}

.design svg, .group-label svg {
  width: 4px;
  height: 3px;
}

.ribbon-body {
  flex: 1;
}

.ribbon-tabs {
  display: flex;
  height: 17px;
}

.ribbon-tabs button {
  width: 49px;
  padding-top: 3px;
  display: flex;
  flex-direction: column;
  align-items: center;
  line-height: 11px;
}

.ribbon-tabs .on {
  color: #1a93cf;
}

.ribbon-tabs .on::after {
  content: '';
  width: 33px;
  height: 2px;
  background: #1a93cf;
}

.groups {
  display: flex;
  gap: 2px;
  padding-left: 3px;
}

.group {
  display: flex;
  flex-direction: column;
  align-items: center;
  padding: 0 3px 0 0;
  border-right: 1px solid #ddd;
}

.group:last-child {
  border: 0;
}

.tools {
  display: flex;
  height: 28px;
  align-items: center;
}

.tool {
  width: 31px;
  display: flex;
  justify-content: center;
}

.group:nth-child(n+4) .tool {
  width: 36px;
}

.tool svg {
  width: 26px;
  height: 27px;
}

.group-label {
  display: flex;
  align-items: center;
  gap: 3px;
}

/* canvas */
.canvas {
  position: relative;
  flex: 1;
  min-height: 0;
}

.scene {
  position: absolute;
  inset: 0;
  width: 100%;
  height: 100%;
}

.cube-text, .axis {
  font-family: "Noto Sans CJK SC", sans-serif;
}

.palettes {
  position: relative;
  display: flex;
  gap: 3px;
  padding: 4px 0 0 3px;
}

.palette {
  width: 213px;
  height: 17px;
  display: flex;
  align-items: center;
  gap: 4px;
  padding: 0 1px 0 4px;
  box-sizing: border-box;
  background: #f3f3f3;
  border: 1px solid #e0e0e0;
}

.palette.comments {
  width: 286px;
}

.palette span {
  flex: 1;
  padding-left: 2px;
  color: #555;
}

.palette i {
  width: 1px;
  height: 7px;
  border: solid #aaa;
  border-width: 0 1px;
}

.fold {
  width: 7px;
  height: 4px;
}

.tree {
  position: relative;
  padding: 2px 0 0 15px;
}

.tree li {
  height: 17px;
  display: flex;
  align-items: center;
  gap: 5px;
  padding-left: 12px;
}

.tree .root {
  padding-left: 0;
}

/* rows between the sketches and this one stay under the dialog */
.tree .last {
  margin-top: 342px;
}

.twist {
  width: 8px;
  height: 9px;
}

.node {
  height: 15px;
  display: flex;
  align-items: center;
  gap: 6px;
  padding: 0 7px 0 4px;
  background: rgba(240, 240, 240, .85);
  color: #444;
}

.root .node {
  gap: 5px;
}

.node span {
  padding-left: 3px;
}

.eye {
  width: 11px;
  height: 7px;
  color: #999;
}

.kind {
  width: 12px;
  height: 10px;
  color: #8d8d8d;
}

.node .root-name {
  display: flex;
  align-items: center;
  gap: 10px;
  height: 12px;
  padding: 0 6px 0 2px;
  background: #8d8d8d;
  color: #fff;
  font-weight: bold;
}

.root-name svg {
  width: 12px;
  height: 12px;
}

.nav-bar {
  position: absolute;
  left: 438px;
  bottom: 4px;
  height: 17px;
  display: flex;
  align-items: center;
  gap: 7px;
  padding: 0 2px;
  background: rgba(242, 242, 242, .9);
}

.nav-bar .drop {
  gap: 2px;
  margin-right: -2px;
}

.nav-bar svg {
  width: 12px;
  height: 12px;
  fill: none;
  stroke: #444;
}

.nav-bar .caret {
  stroke: none;
}

/* loft dialog */
.dialog {
  position: absolute;
  left: -3px;
  top: 126px;
  width: 283px;
  box-sizing: border-box;
  background: #f0f0f0;
  border: 1px solid #d6d6d6;
}

.dialog-title {
  height: 16px;
  display: flex;
  align-items: center;
  gap: 6px;
  padding-left: 2px;
  border-bottom: 1px solid #d6d6d6;
  color: #666;
}

.dialog-tabs {
  height: 18px;
  display: flex;
  align-items: flex-end;
  border-bottom: 1px solid #d0d0d0;
}

.dialog-tabs button {
  width: 27px;
  height: 17px;
  border-right: 1px solid #d0d0d0;
}

.dialog-tabs .on {
  height: 18px;
  margin-bottom: -1px;
  border-top: 1px solid #d0d0d0;
  background: #f0f0f0;
}

.dialog-body {
  padding: 1px 21px 0 5px;
}

.row {
  position: relative;
  height: 22px;
  display: flex;
  align-items: center;
  gap: 5px;
}

.label {
  width: 36px;
  padding-left: 2px;
  white-space: nowrap;
}

.pick {
  width: 16px;
  height: 19px;
}

.pick svg {
  width: 16px;
  height: 18px;
}

.pick.on {
  background: #0f8fd3;
}

.pick.hover {
  background: #ddd;
}

.list {
  height: 61px;
  display: flex;
  align-items: flex-end;
  gap: 11px;
  margin: 3px 0 1px;
  padding: 0 6px 6px;
  box-sizing: border-box;
  background: #fff;
  border: 1px solid #d8d8d8;
}

.list svg {
  width: 7px;
  height: 7px;
}

.list .off {
  color: #aaa;
}

.tip-anchor {
  position: absolute;
  left: 34px;
  top: 10px;
  z-index: 1;
}

.pointer {
  position: absolute;
  left: 40px;
  top: 0;
  width: 10px;
  height: 14px;
  z-index: 1;
}

.tip {
  margin-top: 14px;
  padding: 1px 10px;
  border-radius: 7px;
  background: #4a4a4a;
  color: #fff;
  font-size: 9px;
  font-weight: bold;
  white-space: nowrap;
}

input[type="checkbox"] {
  appearance: none;
  width: 10px;
  height: 10px;
  margin: 0 0 0 3px;
  border: 1px solid #777;
  border-radius: 2px;
  background: linear-gradient(#fff, #ccc);
  display: grid;
  place-items: center;
}

input[type="checkbox"]:checked::after {
  content: '';
  width: 3px;
  height: 6px;
  border: solid #222;
  border-width: 0 1px 1px 0;
  transform: rotate(40deg);
}

.select {
  flex: 1;
  height: 18px;
  display: flex;
  align-items: center;
  gap: 2px;
  padding: 0 3px 0 2px;
  background: #fff;
  border: 1px solid #ddd;
  box-sizing: border-box;
}

.select select {
  flex: 1;
  appearance: none;
}

.dialog-foot {
  height: 24px;
  display: flex;
  align-items: center;
  gap: 6px;
  padding: 0 8px 0 4px;
  border-top: 1px solid #d6d6d6;
}

.dialog-foot button {
  width: 43px;
  height: 15px;
  border: 1px solid #bbb;
  background: #e8e8e8;
  font-size: 9px;
}

.dialog-foot button:disabled {
  color: #aaa;
}

.info {
  width: 9px;
  height: 9px;
  margin-right: auto;
}

/* timeline */
.timeline {
  height: 35px;
  flex: none;
  display: flex;
  border-top: 1px solid #bdbdbd;
  box-sizing: border-box;
  background: #f0f0f0;
}

.playback {
  display: flex;
  align-items: center;
  gap: 8px;
  width: 101px;
  padding-left: 7px;
  box-sizing: border-box;
  fill: #333;
}

.playback svg {
  width: 10px;
  height: 10px;
}

.steps {
  flex: 1;
  display: flex;
  padding: 9px 60px 0 0;
}

.step {
  position: relative;
  flex: 1;
  height: 19px;
}

/* rail with one tick per feature */
.step::after {
  content: '';
  display: block;
  width: 100%;
  height: 4px;
  margin: 2px 0 0 9px;
  border: solid #c4c4c4;
  border-width: 0 0 1px 1px;
}

.step:last-child::after {
  width: 0;
}

.step-icon {
  width: 13px;
  height: 13px;
  margin: 0 auto;
}

.future .step-icon {
  opacity: .22;
}

.marker {
  position: absolute;
  right: -4px;
  top: -3px;
  width: 10px;
  height: 24px;
  z-index: 1;
  fill: #444;
}
</style>
